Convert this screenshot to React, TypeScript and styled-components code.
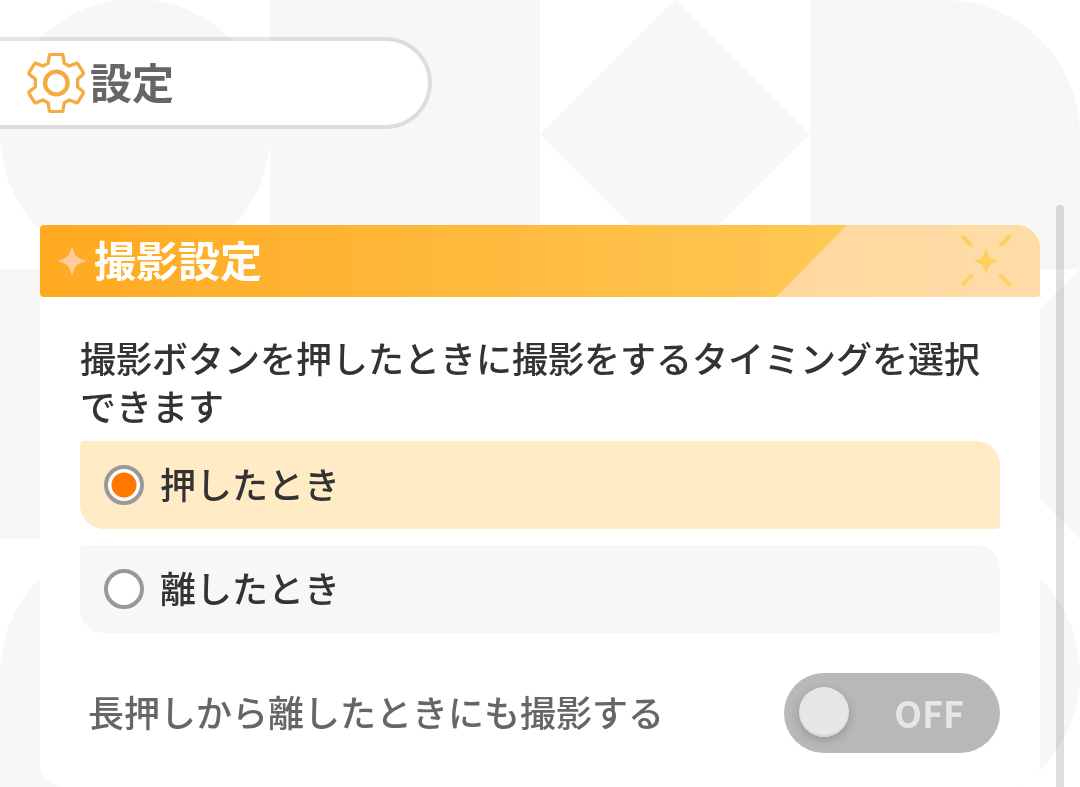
import React, { useState } from "react";
import styled, { createGlobalStyle } from "styled-components";

const GlobalStyle = createGlobalStyle`
  *, *::before, *::after { box-sizing: border-box; }
  body {
    margin: 0;
    background: #fff;
    color: #333;
    font-family: "Noto Sans CJK JP", sans-serif;
    font-weight: 500;
  }
`;

const Backdrop = styled.svg`
  position: fixed;
  top: 0;
  left: 0;
  z-index: -1;
  width: 100%;
  fill: #f7f7f7;
`;

const Page = styled.div`
  padding-top: 37px;
`;

const TitleBar = styled.header`
  display: flex;
  align-items: center;
  gap: 4px;
  width: 40%;
  min-width: 240px;
  height: 92px;
  padding-left: 26px;
  border: 4px solid rgba(0, 0, 0, 0.1);
  border-left: 0;
  border-radius: 0 46px 46px 0;
  background: #fff;
  background-clip: padding-box;
`;

const GearIcon = styled.svg`
  flex: none;
  width: 60px;
  height: 60px;
  fill: none;
  stroke: #f6ab42;
  stroke-linejoin: round;
`;

const Title = styled.h1`
  margin: 0;
  padding-bottom: 4px;
  color: #666;
  font-size: 42px;
  line-height: 60px;
  font-weight: 700;
`;

const ScrollArea = styled.div`
  display: flex;
  gap: 16px;
  margin-top: 76px;
  padding: 0 16px 0 40px;
`;

const ScrollThumb = styled.div`
  flex: none;
  width: 8px;
  border-radius: 4px 4px 0 0;
  background: rgba(0, 0, 0, 0.13);
`;

const Card = styled.section`
  flex: 1;
  min-width: 0;
  margin-top: 20px;
  border-radius: 4px 24px 24px 24px;
  background: rgba(255, 255, 255, 0.9);
`;

const CardHeader = styled.div`
  display: flex;
  justify-content: space-between;
  height: 72px;
  padding-left: 16px;
  overflow: hidden;
  border-radius: 4px 24px 4px 4px;
  background: linear-gradient(90deg, #ffa920, #ffcf62);
`;

const Heading = styled.h2`
  display: flex;
  align-items: center;
  gap: 6px;
  margin: 0;
  color: #fff;
  font-size: 42px;
  line-height: 68px;
  font-weight: 700;
`;

const HeadingText = styled.span`
  padding-bottom: 4px;
`;

const Sparkle = styled.svg`
  width: 32px;
  height: 32px;
  fill: #ffcb9c;
`;

const HeaderAccent = styled.svg`
  flex: none;
  width: 264px;
  height: 72px;
`;

const CardBody = styled.div`
  padding: 36px 40px 34px;
`;

const Choices = styled.fieldset`
  display: flex;
  flex-direction: column;
  gap: 16px;
  min-width: 0;
  margin: 0;
  padding: 0;
  border: 0;
`;

const Description = styled.legend`
  padding: 0 0 12px;
  font-size: 36px;
  line-height: 48px;
`;

const Option = styled.label<{ $selected: boolean }>`
  display: flex;
  align-items: center;
  gap: 16px;
  height: 88px;
  padding: 0 24px;
  border-radius: 4px 24px 4px 24px;
  background: ${(p) => (p.$selected ? "#ffecc6" : "#f8f7f5")};
  cursor: pointer;
`;

const OptionText = styled.span`
  padding-bottom: 4px;
  font-size: 36px;
  line-height: 48px;
`;

const Radio = styled.input`
  appearance: none;
  flex: none;
  width: 40px;
  height: 40px;
  margin: 0;
  border: 4px solid #999;
  border-radius: 50%;
  background: #fff;

  &:checked {
    background: radial-gradient(circle, #ff7800 12px, #fff 13px);
  }
`;

const SwitchRow = styled.div`
  display: flex;
  align-items: center;
  justify-content: space-between;
  margin-top: 40px;
  padding-left: 8px;
`;

const SwitchLabel = styled.span`
  padding-bottom: 4px;
  color: #666;
  font-size: 36px;
  line-height: 48px;
`;

const Switch = styled.button`
  display: flex;
  align-items: center;
  justify-content: space-between;
  flex: none;
  width: 216px;
  height: 80px;
  padding: 0 36px 2px 15px;
  border: 0;
  border-radius: 40px;
  background: #b8b8b8;
  color: #e6e6e6;
  font: inherit;
  font-size: 36px;
  line-height: 48px;
  font-weight: 700;
`;

const Knob = styled.span`
  width: 50px;
  height: 50px;
  border-radius: 50%;
  background: #e6e6e6;
  box-shadow: inset 0 -2px 1px #d0d6d8, 0 3px 10px rgba(0, 0, 0, 0.2);
`;

const timings = [
  { value: "press", label: "押したとき" },
  { value: "release", label: "離したとき" },
];

export default function App() {
  const [timing, setTiming] = useState("press");

  return (
    <>
      <GlobalStyle />
      <Backdrop viewBox="0 0 1080 810" aria-hidden="true">
        <circle cx="135" cy="134" r="135" />
        <path d="M270 0H540V270H270Z" />
        <path d="M675 -1L810 134L675 269L540 134Z" />
        <path d="M810 0H945A135 135 0 0 1 1080 135V269H810Z" />
        <path d="M0 269H270V539H0Z" />
        <path d="M270 269L540 539H270Z" />
        <path d="M540 269H810V539H540Z" />
        <path d="M810 269L945 404L1080 269V539L945 404L810 539Z" />
        <path d="M135 539H270V810H0V674A135 135 0 0 1 135 539Z" />
        <path d="M405 539L540 674L405 809L270 674Z" />
        <path d="M540 539H810L540 809Z" />
        <circle cx="945" cy="674" r="135" />
      </Backdrop>
      <Page>
        <TitleBar>
          <GearIcon viewBox="79 99 180 180" aria-hidden="true">
            <path
              strokeWidth="10"
              d="M154 103H185Q189 103 190 107L194 130L209 138L229 130Q233 129 235 132L251 158Q252 162 249 164L234 177V201L249 214Q252 217 251 220L235 246Q233 249 229 248L209 240L194 248L190 271Q189 275 185 275H154Q150 275 149 271L145 248L130 240L110 248Q106 249 104 246L88 220Q87 217 90 214L107 201V177L90 164Q87 162 88 158L104 132Q106 129 110 130L130 138L145 130L149 107Q150 103 154 103Z"
            />
            <circle cx="170" cy="189" r="34" strokeWidth="13" />
          </GearIcon>
          <Title>設定</Title>
        </TitleBar>
        <ScrollArea>
          <Card>
            <CardHeader>
              <Heading>
                <Sparkle viewBox="-16 -16 32 32" aria-hidden="true">
                  <path d="M0 -14Q1 -14 1 -12C3 -5 5 -3 12 -1Q14 -1 14 0Q14 1 12 1C5 3 3 5 1 12Q1 14 0 14Q-1 14 -1 12C-3 5 -5 3 -12 1Q-14 1 -14 0Q-14 -1 -12 -1C-5 -3 -3 -5 -1 -12Q-1 -14 0 -14Z" />
                </Sparkle>
                <HeadingText>撮影設定</HeadingText>
              </Heading>
              <HeaderAccent viewBox="0 0 264 72" aria-hidden="true">
                <path d="M71 0H264V72H0Z" fill="#ffe8e0" fillOpacity="0.55" />
                <g transform="translate(210 36)" fill="#ffcf60" stroke="#ffcf60">
                  <path
                    stroke="none"
                    d="M0 -12Q1 -12 1 -10C2 -5 5 -2 10 -1Q12 -1 12 0Q12 1 10 1C5 2 2 5 1 10Q1 12 0 12Q-1 12 -1 10C-2 5 -5 2 -10 1Q-12 1 -12 0Q-12 -1 -10 -1C-5 -2 -2 -5 -1 -10Q-1 -12 0 -12Z"
                  />
                  <path
                    strokeWidth="4"
                    strokeLinecap="round"
                    d="M-23 -24L-15 -16M23 -24L15 -16M-23 23L-15 15M23 23L15 15"
                  />
                </g>
              </HeaderAccent>
            </CardHeader>
            <CardBody>
              <Choices>
                <Description>
                  撮影ボタンを押したときに撮影をするタイミングを選択できます
                </Description>
                {timings.map(({ value, label }) => (
                  <Option key={value} $selected={timing === value}>
                    <Radio
                      type="radio"
                      name="timing"
                      value={value}
                      checked={timing === value}
                      onChange={() => setTiming(value)}
                    />
                    <OptionText>{label}</OptionText>
                  </Option>
                ))}
              </Choices>
              <SwitchRow>
                <SwitchLabel id="long-press-label">
                  長押しから離したときにも撮影する
                </SwitchLabel>
                <Switch
                  type="button"
                  role="switch"
                  aria-checked="false"
                  aria-labelledby="long-press-label"
                  disabled
                >
                  <Knob />
                  OFF
                </Switch>
              </SwitchRow>
            </CardBody>
          </Card>
          <ScrollThumb />
        </ScrollArea>
      </Page>
    </>
  );
}
